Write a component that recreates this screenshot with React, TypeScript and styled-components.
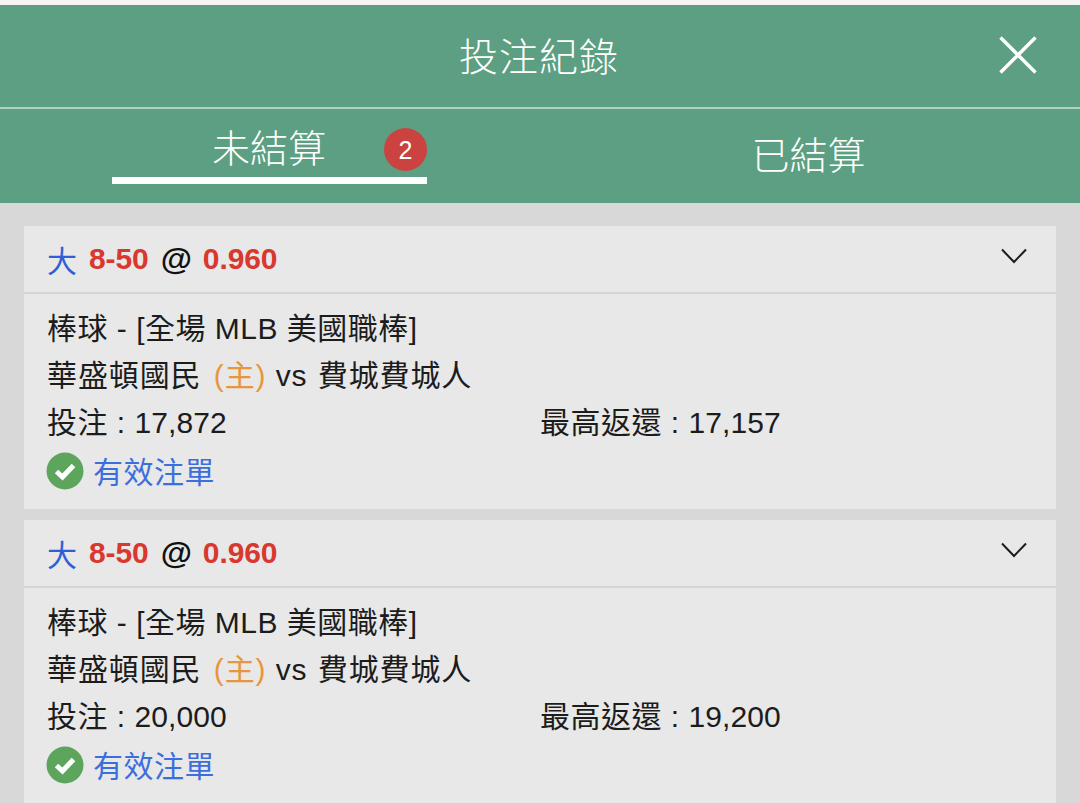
import * as React from "react";
import styled, { createGlobalStyle } from "styled-components";

const GlobalStyle = createGlobalStyle`
  html, body {
    margin: 0;
    padding: 0;
    background: #d8d8d8;
  }
  * {
    box-sizing: border-box;
  }
`;

const FONT = `"Liberation Sans", "Noto Sans CJK TC", sans-serif`;

interface IBet {
  stake: string;
  payout: string;
}

const bets: IBet[] = [
  { stake: "17,872", payout: "17,157" },
  { stake: "20,000", payout: "19,200" }
];

const App: React.FC = () => {
  return (
    <Page>
      <GlobalStyle />
      <TopStrip />
      <TitleBar>
        <Title>投注紀錄</Title>
        <CloseIcon viewBox="0 0 38 38">
          <path d="M1.5 1.5 L36.5 36.5 M36.5 1.5 L1.5 36.5" />
        </CloseIcon>
      </TitleBar>
      <Tabs>
        <Tab>
          <ActiveTabLabel>
            未結算
            <Badge>2</Badge>
          </ActiveTabLabel>
        </Tab>
        <Tab>
          <TabLabel>已結算</TabLabel>
        </Tab>
      </Tabs>
      <List>
        {bets.map((bet, i) => (
          <Card key={i}>
            <CardHeader>
              <Pick>
                <Blue>大</Blue>
                <Red>8-50</Red>
                <At>@</At>
                <Red>0.960</Red>
              </Pick>
              <Chevron viewBox="0 0 26 16">
                <path d="M1 1.5 L13 14 L25 1.5" />
              </Chevron>
            </CardHeader>
            <CardBody>
              <Line>棒球 - [全場 MLB 美國職棒]</Line>
              <TeamLine>
                華盛頓國民 <Home>(主)</Home> <Versus>vs</Versus> 費城費城人
              </TeamLine>
              <AmountRow>
                <span>
                  投注 : <Amount>{bet.stake}</Amount>
                </span>
                <span>
                  最高返還 : <Amount>{bet.payout}</Amount>
                </span>
              </AmountRow>
              <Status>
                <CheckIcon viewBox="0 0 38 38">
                  <circle cx="19" cy="19" r="18.5" />
                  <path d="M10.5 19.5 L16.5 25 L27.5 13.5" />
                </CheckIcon>
                有效注單
              </Status>
            </CardBody>
          </Card>
        ))}
      </List>
    </Page>
  );
};

export default App;

const Page = styled.div`
  width: 1080px;
  height: 803px;
  overflow: hidden;
  font-family: ${FONT};
  color: #1c1c1c;
`;

const TopStrip = styled.div`
  height: 5px;
  background: #f4f5f4;
`;

const TitleBar = styled.div`
  position: relative;
  display: flex;
  align-items: center;
  justify-content: center;
  height: 104px;
  padding: 0 2px 4px 0;
  background: #5c9f82;
  border-bottom: 2px solid #b4d0c3;
`;

const Title = styled.div`
  font-size: 39px;
  font-weight: 300;
  letter-spacing: 1px;
  color: #fff;
`;

const CloseIcon = styled.svg`
  position: absolute;
  right: 43px;
  top: 31px;
  width: 38px;
  height: 38px;
  fill: none;
  stroke: #fff;
  stroke-width: 3.4;
`;

const Tabs = styled.div`
  display: grid;
  grid-template-columns: 112px 315px 1fr;
  height: 94px;
  background: #5c9f82;
`;

const Tab = styled.div`
  display: flex;
  justify-content: center;
  &:first-child {
    grid-column: 2;
  }
`;

const TabLabel = styled.div`
  padding-top: 22px;
  margin-left: 110px;
  font-size: 38px;
  font-weight: 300;
  line-height: 50px;
  color: #fff;
`;

const ActiveTabLabel = styled.div`
  position: relative;
  width: 100%;
  height: 75px;
  padding: 15px 0 0 100px;
  font-size: 38px;
  font-weight: 300;
  line-height: 50px;
  color: #fff;
  border-bottom: 7px solid #fff;
`;

const Badge = styled.span`
  position: absolute;
  right: 0;
  top: 19px;
  display: flex;
  align-items: center;
  justify-content: center;
  width: 43px;
  height: 43px;
  border-radius: 50%;
  background: #cb4340;
  font-size: 25px;
  font-weight: 400;
`;

const List = styled.div`
  display: flex;
  flex-direction: column;
  gap: 11px;
  padding: 23px 24px 0;
`;

const Card = styled.div`
  flex: none;
  background: #e8e8e8;
`;

const CardHeader = styled.div`
  display: flex;
  align-items: center;
  justify-content: space-between;
  height: 68px;
  padding: 0 29px 0 23px;
  border-bottom: 2px solid #d4d4d4;
`;

const Pick = styled.div`
  display: flex;
  align-items: center;
  gap: 13px;
  font-size: 30px;
  font-weight: 700;
  color: #111;
`;

const Blue = styled.span`
  margin-right: -1px;
  font-weight: 400;
  color: #2f5fd8;
`;

const Red = styled.span`
  letter-spacing: -0.1px;
  color: #d8382e;
`;

const At = styled.span`
  margin: 0 -2px 0 -1px;
  font-size: 32px;
  line-height: 30px;
`;

const Chevron = styled.svg`
  width: 26px;
  height: 16px;
  margin-bottom: 7px;
  fill: none;
  stroke: #1c1c1c;
  stroke-width: 2;
`;

const CardBody = styled.div`
  height: 215px;
  padding: 11px 24px 0 23px;
  font-size: 30px;
  letter-spacing: 0.5px;
`;

const Line = styled.div`
  height: 47px;
  line-height: 47px;
  white-space: pre;
`;

const TeamLine = styled(Line)`
  letter-spacing: 0.9px;
  word-spacing: 3px;
`;

const AmountRow = styled(Line)`
  display: grid;
  grid-template-columns: 493px 1fr;
`;

const Amount = styled.span`
  letter-spacing: 0.1px;
`;

const Home = styled.span`
  margin-right: -3px;
  color: #e8963c;
`;

const Versus = styled.span`
  margin-right: -2px;
`;

const Status = styled.div`
  display: flex;
  align-items: center;
  gap: 9px;
  height: 50px;
  margin: -1px 0 0 -1px;
  color: #3d6fdc;
`;

const CheckIcon = styled.svg`
  width: 38px;
  height: 38px;
  margin-top: 2px;
  circle {
    fill: #5da55d;
  }
  path {
    fill: none;
    stroke: #fff;
    stroke-width: 5;
  }
`;
